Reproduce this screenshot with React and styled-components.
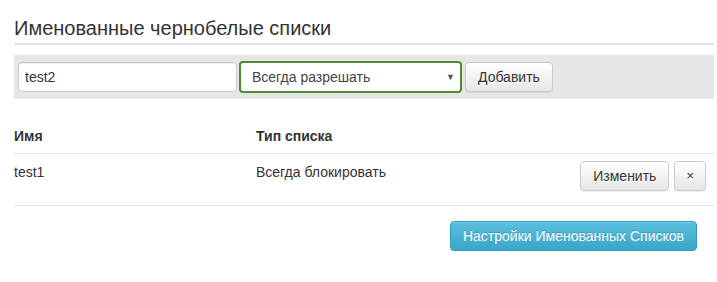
import React from "react";
import styled, { createGlobalStyle } from "styled-components";

const Global = createGlobalStyle`
  html, body { margin: 0; padding: 0; background: #fff; }
  body {
    font-family: "Liberation Sans", Arial, Helvetica, sans-serif;
    font-size: 14px;
    line-height: 20px;
    color: #333;
  }
`;

const Page = styled.div`
  width: 700px;
  padding: 14px 0 0 14px;
`;

const Legend = styled.h3`
  margin: 0 0 10px;
  font-size: 20px;
  font-weight: normal;
  line-height: 29px;
  color: #333;
  border-bottom: 2px solid #e5e5e5;
`;

const Bar = styled.div`
  display: flex;
  align-items: center;
  height: 44px;
  padding: 0 4px;
  background: #e6e6e6;
`;

const TextInput = styled.input`
  box-sizing: border-box;
  width: 219px;
  height: 30px;
  padding: 4px 6px;
  margin-right: 2px;
  border: 1px solid #ccc;
  border-radius: 4px;
  background: #fff;
  font: inherit;
  color: #333;
  box-shadow: inset 0 1px 1px rgba(0,0,0,.075);
  outline: none;
`;

const SelectBox = styled.div`
  position: relative;
  box-sizing: border-box;
  width: 223px;
  height: 32px;
  padding: 0 5px 0 11px;
  margin-right: 3px;
  display: flex;
  align-items: center;
  border: 2px solid #4f8b30;
  border-radius: 4px;
  background: #fff;
  color: #444;
`;

const Arrow = styled.span`
  margin-left: auto;
  font-size: 9px;
  color: #555;
  line-height: 1;
`;

const Button = styled.button`
  box-sizing: border-box;
  height: ${p => p.$h || 30}px;
  padding: 0 ${p => p.$px ?? 12}px;
  margin: 0;
  border: 1px solid ${p => (p.$info ? "#2b9ec2" : "#ccc")};
  border-radius: 4px;
  font: inherit;
  font-size: ${p => p.$fs || 14}px;
  color: ${p => (p.$info ? "#fff" : "#333")};
  background: ${p =>
    p.$info
      ? "linear-gradient(to bottom, #5bc0de 0%, #3aa6c9 100%)"
      : "linear-gradient(to bottom, #fff 0%, #e6e6e6 100%)"};
  text-shadow: ${p => (p.$info ? "0 -1px 0 rgba(0,0,0,.2)" : "0 1px 0 #fff")};
  box-shadow: inset 0 1px 0 rgba(255,255,255,.15), 0 1px 1px rgba(0,0,0,.075);
  cursor: pointer;
`;

const Table = styled.div`
  margin-top: 18px;
`;

const Row = styled.div`
  display: grid;
  grid-template-columns: 242px 1fr auto;
  align-items: start;
  border-bottom: 1px solid #e3e3e3;
  padding: ${p => (p.$head ? "9px 0 7px" : "6px 8px 14px 0")};
  font-weight: ${p => (p.$head ? "bold" : "normal")};
`;

const Cell = styled.div`
  padding-top: ${p => p.$pt || 0}px;
`;

const Actions = styled.div`
  display: flex;
  gap: 5px;
  padding-top: 1px;
`;

const Footer = styled.div`
  display: flex;
  justify-content: flex-end;
  padding: 15px 17px 0 0;
`;

export default function App() {
  return (
    <>
      <Global />
      <Page>
        <Legend>Именованные чернобелые списки</Legend>
        <Bar>
          <TextInput defaultValue="test2" />
          <SelectBox>
            Всегда разрешать
            <Arrow>▼</Arrow>
          </SelectBox>
          <Button>Добавить</Button>
        </Bar>
        <Table>
          <Row $head>
            <Cell>Имя</Cell>
            <Cell>Тип списка</Cell>
            <Cell />
          </Row>
          <Row>
            <Cell $pt={2}>test1</Cell>
            <Cell $pt={2}>Всегда блокировать</Cell>
            <Actions>
              <Button>Изменить</Button>
              <Button $px={11} $fs={13}>×</Button>
            </Actions>
          </Row>
        </Table>
        <Footer>
          <Button $info>Настройки Именованных Списков</Button>
        </Footer>
      </Page>
    </>
  );
}
